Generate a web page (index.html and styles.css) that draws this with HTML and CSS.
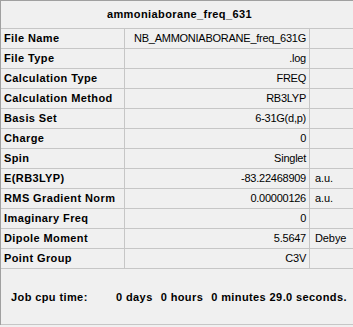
FILE: index.html
```html
<!DOCTYPE html>
<html>
<head>
<meta charset="utf-8">
<link rel="stylesheet" href="styles.css">
</head>
<body>
<div class="panel">
  <div class="title">ammoniaborane_freq_631</div>
  <div class="row"><div class="lab">File Name</div><div class="val">NB_AMMONIABORANE_freq_631G</div><div class="unit"></div></div>
  <div class="row"><div class="lab">File Type</div><div class="val">.log</div><div class="unit"></div></div>
  <div class="row"><div class="lab">Calculation Type</div><div class="val">FREQ</div><div class="unit"></div></div>
  <div class="row"><div class="lab">Calculation Method</div><div class="val">RB3LYP</div><div class="unit"></div></div>
  <div class="row"><div class="lab">Basis Set</div><div class="val">6-31G(d,p)</div><div class="unit"></div></div>
  <div class="row"><div class="lab">Charge</div><div class="val">0</div><div class="unit"></div></div>
  <div class="row"><div class="lab">Spin</div><div class="val">Singlet</div><div class="unit"></div></div>
  <div class="row"><div class="lab">E(RB3LYP)</div><div class="val">-83.22468909</div><div class="unit">a.u.</div></div>
  <div class="row"><div class="lab">RMS Gradient Norm</div><div class="val">0.00000126</div><div class="unit">a.u.</div></div>
  <div class="row"><div class="lab">Imaginary Freq</div><div class="val">0</div><div class="unit"></div></div>
  <div class="row"><div class="lab">Dipole Moment</div><div class="val">5.5647</div><div class="unit">Debye</div></div>
  <div class="row"><div class="lab">Point Group</div><div class="val">C3V</div><div class="unit"></div></div>
  <div class="job">
    <span class="job-label">Job cpu time:</span>
    <span>0 days</span>
    <span>0 hours</span>
    <span>0 minutes 29.0 seconds.</span>
  </div>
</div>
</body>
</html>
```
FILE: styles.css
```css
html, body {
  margin: 0;
  padding: 0;
  background: #f0f0f0;
}
body {
  width: 353px;
  height: 327px;
  overflow: hidden;
  font-family: "Liberation Sans", Arial, sans-serif;
  font-size: 11px;
  color: #000;
}
.panel {
  border-left: 1px solid #a0a0a0;
  border-top: 1px solid #a0a0a0;
  width: 352px;
}
.title {
  height: 27px;
  line-height: 27px;
  text-align: center;
  font-weight: bold;
  letter-spacing: 0.4px;
  padding-left: 5px;
  border-bottom: 1px solid #c6c6c6;
}
.row {
  display: flex;
  height: 19px;
  line-height: 19px;
  border-bottom: 1px solid #c6c6c6;
}
.lab {
  width: 120px;
  padding-left: 3px;
  border-right: 1px solid #c6c6c6;
  font-weight: bold;
  letter-spacing: 0.4px;
  white-space: nowrap;
  overflow: hidden;
}
.val {
  width: 181px;
  padding-right: 3px;
  border-right: 1px solid #c6c6c6;
  text-align: right;
  letter-spacing: -0.25px;
  white-space: nowrap;
}
.unit {
  flex: 1;
  padding-left: 5px;
  letter-spacing: -0.1px;
  white-space: nowrap;
}
.job {
  height: 55px;
  display: flex;
  align-items: center;
  gap: 8px;
  padding-left: 10px;
  border-bottom: 1px solid #c6c6c6;
  font-weight: bold;
  letter-spacing: 0.4px;
  white-space: nowrap;
}
.job-label {
  width: 97px;
}
```
